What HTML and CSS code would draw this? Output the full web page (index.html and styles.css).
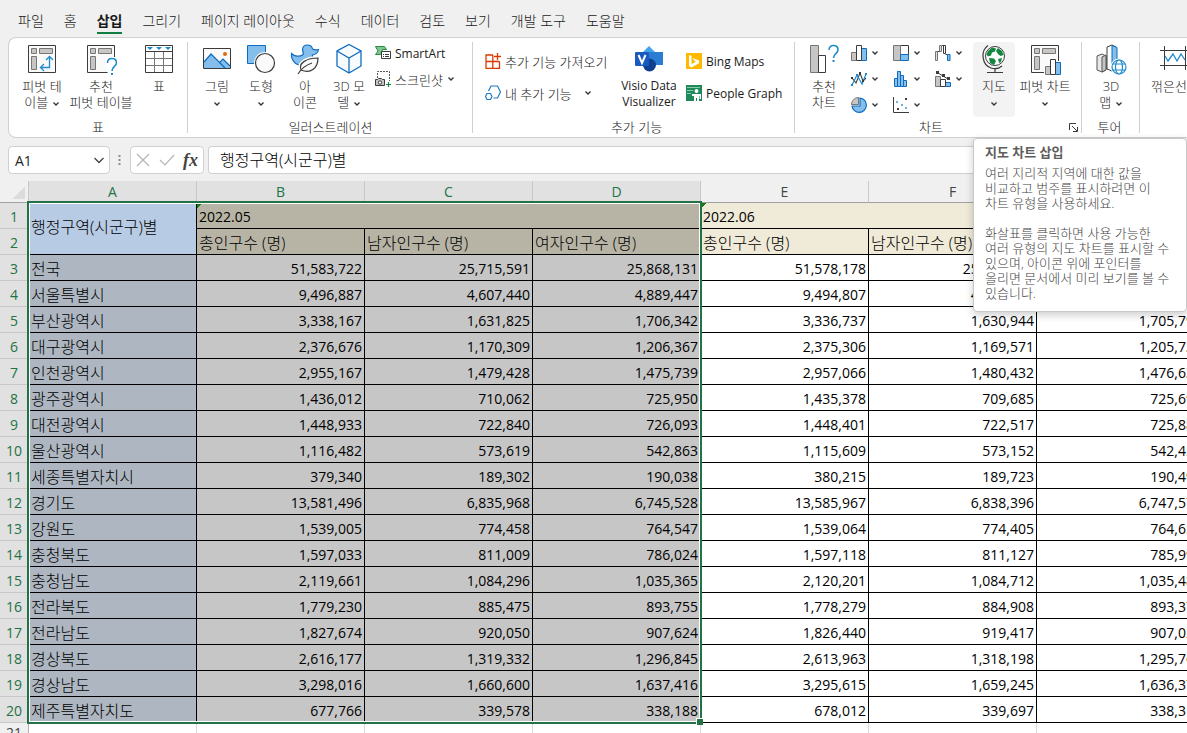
FILE: index.html
```html
<!DOCTYPE html>
<html lang="ko">
<head>
  <meta charset="UTF-8">
  <meta name="viewport" content="width=device-width, initial-scale=1.0">
  <title>행정구역별 인구</title>
  <link rel="stylesheet" href="styles.css">
</head>
<body>

  <svg class="defs" aria-hidden="true">
    <symbol id="chev" viewBox="0 0 8 6"><path d="M1.500 1.500 4 4l2.500-2.500" fill="none" stroke="#333" stroke-width="1.300"/></symbol>
  </svg>

  <!-- Tabs -->
  <nav class="tabs">
    <a href="#">파일</a>
    <a href="#">홈</a>
    <a href="#" class="active">삽입</a>
    <a href="#">그리기</a>
    <a href="#">페이지 레이아웃</a>
    <a href="#">수식</a>
    <a href="#">데이터</a>
    <a href="#">검토</a>
    <a href="#">보기</a>
    <a href="#">개발 도구</a>
    <a href="#">도움말</a>
  </nav>

  <!-- Ribbon -->
  <div class="ribbon">
    <section class="group tables">
      <div class="tools">
        <button class="big w54">
          <svg class="icon" viewBox="0 0 32 32" fill="none"><path d="M2.500 2.500h27v27h-27z" fill="#fafafa" stroke="#3b3b3b"/><path d="M5.500 5.500h5v5h-5zM13.500 5.500h13v5h-13zM5.500 13.500h5v13h-5z" fill="#c8c6c4" stroke="#797774"/><path d="M15 24.500h8.500V14M20 17l3.500-3.500L27 17M18 21l-3.500 3.500L18 28" stroke="#1e8bcd" stroke-width="1.300"/></svg>
          <span>피벗 테<br>이블 <svg class="chev"><use href="#chev"/></svg></span>
        </button>
        <button class="big w64">
          <svg class="icon" viewBox="0 0 32 32" fill="none"><path d="M2.500 2.500h27v27h-27z" fill="#fafafa" stroke="#3b3b3b"/><path d="M5.500 5.500h5v5h-5zM13.500 5.500h13v5h-13zM5.500 13.500h5v13h-5z" fill="#c8c6c4" stroke="#797774"/><path d="M20 14h12v18H23z" fill="#fff"/><path d="M22.500 20c0-3 2-4.500 4.500-4.500s4.500 1.600 4.500 4.300c0 3.700-4.500 3.700-4.500 8.200" stroke="#1e8bcd" stroke-width="1.600"/><path d="M26 30h2v2h-2z" fill="#1e8bcd"/></svg>
          <span>추천<br>피벗 테이블</span>
        </button>
        <button class="big w52">
          <svg class="icon" viewBox="0 0 32 32" fill="none"><path d="M2.500 2.500h27v27h-27z" fill="#fff" stroke="#3b3b3b"/><path d="M3 15.500h26M3 22.500h26M11.500 9v20M20.500 9v20" stroke="#797774"/><path d="M2 8.500h28" stroke="#3b3b3b"/><path d="M4 4h6L7 7zM13 4h6l-3 3zM22 4h6l-3 3z" fill="#1e8bcd"/></svg>
          <span>표</span>
        </button>
      </div>
      <div class="caption">표</div>
    </section>

    <section class="group illust">
      <div class="tools">
        <button class="big w44">
          <svg class="icon" viewBox="0 0 32 32"><path d="M2.500 5.500h27v20h-27z" fill="#fafafa"/><path d="M3 19l7-8 8 9 4-4 7 7v2H3z" fill="#83beec"/><path d="M3 19l7-8 14 14M18 20l4-4 7 7" fill="none" stroke="#0f6cbd" stroke-width="1.200"/><path d="M2.500 5.500h27v20h-27z" fill="none" stroke="#3b3b3b"/><circle cx="24" cy="11" r="2" fill="#d86b0b"/></svg>
          <span>그림<br><svg class="chev"><use href="#chev"/></svg></span>
        </button>
        <button class="big w44">
          <svg class="icon" viewBox="0 0 32 32"><path d="M2.500 2.500h18v18h-18z" fill="#83beec" stroke="#0f6cbd"/><circle cx="20" cy="20" r="11" fill="#fff"/><circle cx="20" cy="20" r="9.500" fill="#fafafa" stroke="#3b3b3b" stroke-width="1.200"/></svg>
          <span>도형<br><svg class="chev"><use href="#chev"/></svg></span>
        </button>
        <button class="big w44">
          <svg class="icon" viewBox="0 0 32 32"><path d="M2.500 10.500c3 3 8 3.500 11 1.500 2-1.500 0-4 0-5 0-3 2-5 5-5 2.500 0 4.500 1.500 5 4 2 1 4 1 6 .5-.5 3-3 5-6 5.500 1 5-3 10.500-10 10.500C6 22.500 2 17 2.500 10.500z" fill="#83beec" stroke="#0f6cbd" stroke-width="1.200"/><path d="M12 27c-3-7 6-12 17-12 0 10-7 16-17 12z" fill="#fff" stroke="#fff" stroke-width="4"/><path d="M12 27c-3-7 6-12 17-12 0 10-7 16-17 12zM9 31c3-5 8-9 14-11" fill="#fafafa" stroke="#3b3b3b" stroke-width="1.200"/></svg>
          <span>아<br>이콘</span>
        </button>
        <button class="big w44">
          <svg class="icon" viewBox="0 0 32 32"><path d="M16 1.500 28 8v15l-12 7-12-7V8z" fill="#f8fbfe" stroke="#0f6cbd" stroke-width="1.300"/><path d="M4 8l12 7 12-7M16 15v15" fill="none" stroke="#0f6cbd" stroke-width="1.300"/></svg>
          <span>3D 모<br>델 <svg class="chev"><use href="#chev"/></svg></span>
        </button>
        <div class="stack">
          <button class="small latin">
            <svg class="mini" viewBox="0 0 16 16"><path d="M.500 1.500h9l2 3h-4l-2 5h-5L3 6z" fill="#7fc692" stroke="#2b8a3e"/><path d="M6.500 6.500h9v7h-9z" fill="#fff" stroke="#3b3b3b"/><path d="M8 9.500h1m1 0h4M8 11.500h1m1 0h4" stroke="#3b3b3b"/></svg>
            <span>SmartArt</span>
          </button>
          <button class="small">
            <svg class="mini" viewBox="0 0 16 16" fill="none"><path d="M2.500 7V.500h12V10" stroke="#555" stroke-dasharray="2 1"/><path d="M.500 8.500h2l1-1h3l1 1h2v6h-9z" fill="#c8c6c4" stroke="#3b3b3b"/><circle cx="5" cy="11.500" r="1.700" fill="#fff" stroke="#3b3b3b"/><path d="M13.500 11v5M11 13.500h5" stroke="#13873d" stroke-width="1.200"/></svg>
            <span>스크린샷</span><svg class="chev"><use href="#chev"/></svg>
          </button>
        </div>
      </div>
      <div class="caption">일러스트레이션</div>
    </section>

    <section class="group addins">
      <div class="tools">
        <div class="stack wide first">
          <button class="small">
            <svg class="mini" viewBox="0 0 16 16" fill="none"><path d="M8 2H1v13.300h13.500V8.500M1 8.500h13.500M7.800 2v13" stroke="#d83b01" stroke-width="1.300"/><path d="M12.500 0v7M9 3.500h7" stroke="#d83b01" stroke-width="1.300"/></svg>
            <span>추가 기능 가져오기</span>
          </button>
          <button class="small">
            <svg class="mini" viewBox="0 0 16 16" fill="none" stroke="#1e78c8" stroke-width="1.200"><path d="M3.500 6 6 1h6.500L15.500 7l-3 6H8.500"/><path d="M2 8.500h3.500l1.500 3-1.500 3H2l-1.500-3z"/></svg>
            <span>내 추가 기능</span><svg class="chev far"><use href="#chev"/></svg>
          </button>
        </div>
        <button class="big latin w66">
          <svg class="icon" viewBox="0 0 32 32"><path d="M16 3 26 13 16 23 6 13z" fill="#41a5ee"/><path d="M16 9h14v13H16z" fill="#2b7cd3"/><circle cx="16.500" cy="22" r="6.500" fill="#103f91"/><rect x="2" y="9" width="14" height="14" rx="1" fill="#185abd"/><path d="M5.500 12 9 20l3.500-8" fill="none" stroke="#fff" stroke-width="2"/></svg>
          <span>Visio Data<br>Visualizer</span>
        </button>
        <div class="stack wide">
          <button class="small latin">
            <svg class="mini" viewBox="0 0 16 16"><path d="M0 0h16v16H0z" fill="#ffb900"/><path d="M3 2l2.500 1v8L13 7.500v2.700L5.500 14.500 3 13z" fill="#fff"/><path d="M6.500 5 13 7.500v2.500L9 8.500z" fill="#fff"/></svg>
            <span>Bing Maps</span>
          </button>
          <button class="small latin">
            <svg class="mini" viewBox="0 0 16 16"><path d="M0 0h16v16H0z" fill="#1e8a5b"/><path d="M1 2.500h13M1 5.500h6M1 8.500h4" stroke="#8ccbae"/><circle cx="10.500" cy="6" r="2" fill="#fff"/><path d="M6 9h9v5h-1.500v-3H13v5h-2v-3h-1v3H8v-5H6z" fill="#fff"/></svg>
            <span>People Graph</span>
          </button>
        </div>
      </div>
      <div class="caption">추가 기능</div>
    </section>

    <section class="group charts">
      <div class="tools">
        <button class="big w50">
          <svg class="icon" viewBox="0 0 32 32" fill="none"><path d="M2.500 2.500h8v27h-8z" fill="#c8c6c4" stroke="#797774"/><path d="M10.500 12.500h7v17h-7z" fill="#fff" stroke="#3b3b3b"/><path d="M21 7c0-3 2-4.500 4.500-4.500S30 4 30 6.800c0 4-4.500 3.700-4.500 8.200" stroke="#1e8bcd" stroke-width="1.600"/><path d="M24.500 17h2v2h-2z" fill="#1e8bcd"/></svg>
          <span>추천<br>차트</span>
        </button>
        <div class="chart-grid">
          <button class="small" aria-label="세로 막대형"><svg class="mini" viewBox="0 0 16 16"><path d="M.500 7.500h5v8h-5z" fill="#c8c6c4" stroke="#797774"/><path d="M10.500 3.500h5v12h-5z" fill="#83beec" stroke="#0f6cbd"/><path d="M5.500.500h5v15h-5z" fill="#fff" stroke="#3b3b3b"/></svg><svg class="chev"><use href="#chev"/></svg></button>
          <button class="small" aria-label="계층 구조"><svg class="mini" viewBox="0 0 16 16"><path d="M7.500.500h8v9h-8z" fill="#fff" stroke="#3b3b3b"/><path d="M.500.500h7v15h-7z" fill="#c8c6c4" stroke="#797774"/><path d="M7.500 9.500h8v6h-8z" fill="#83beec" stroke="#0f6cbd"/></svg><svg class="chev"><use href="#chev"/></svg></button>
          <button class="small" aria-label="폭포"><svg class="mini" viewBox="0 0 16 16" fill="#fff"><path d="M.500 6.500h2v9h-2zM4.500.500h2v6h-2z" fill="#ddd" stroke="#797774"/><path d="M2.500 6.500h2M7 .500h3.500v8h-2v-8M10.500 9.500h2" stroke="#3b3b3b"/><path d="M12.500 9.500h2.500v6h-2.500z" fill="#83beec" stroke="#0f6cbd"/></svg><svg class="chev"><use href="#chev"/></svg></button>
          <button class="small" aria-label="꺾은선형"><svg class="mini" viewBox="0 0 16 16" fill="none"><path d="M1 7l4 5 4-10 3 8 3-3" stroke="#3b3b3b" stroke-width="1.100"/><path d="M1 14 6 4l5 9 4-10" stroke="#1e8bcd" stroke-width="1.200"/><path d="M0 6h2v2H0zM8 1h2v2H8zM11 9h2v2h-2z" fill="#3b3b3b"/><path d="M0 13h2v2H0zM5 3h2v2H5zM14 2h2v2h-2z" fill="#1e8bcd"/></svg><svg class="chev"><use href="#chev"/></svg></button>
          <button class="small" aria-label="히스토그램"><svg class="mini" viewBox="0 0 16 16"><path d="M1.500 7.500h3v8h-3zM4.500.500h3v15h-3zM7.500 4.500h3v11h-3zM10.500 9.500h3v6h-3z" fill="#83beec" stroke="#0f6cbd"/></svg><svg class="chev"><use href="#chev"/></svg></button>
          <button class="small" aria-label="혼합"><svg class="mini" viewBox="0 0 16 16"><path d="M.500 5.500h5v10h-5z" fill="#c8c6c4" stroke="#797774"/><path d="M10.500 11.500h5v4h-5z" fill="#83beec" stroke="#0f6cbd"/><path d="M5.500 8.500h5v7h-5z" fill="#fff" stroke="#3b3b3b"/><path d="M3 2l5 3 5 3" fill="none" stroke="#3b3b3b"/><path d="M1 0h3v3H1zM7 3h3v3H7zM12 6h3v3h-3z" fill="#3b3b3b"/></svg><svg class="chev"><use href="#chev"/></svg></button>
          <button class="small" aria-label="원형"><svg class="mini" viewBox="0 0 16 16"><path d="M9 1a7.200 7.200 0 1 1-8 8h8z" fill="#83beec" stroke="#0f6cbd" stroke-width="1.200"/><path d="M7.500.500v7h-7a7 7 0 0 1 7-7z" fill="#c8c6c4" stroke="#797774"/></svg><svg class="chev"><use href="#chev"/></svg></button>
          <button class="small" aria-label="분산형"><svg class="mini" viewBox="0 0 16 16"><path d="M.500 0v15.500H16" fill="none" stroke="#3b3b3b"/><path d="M12 1h2v2h-2zM4 11h2v2H4z" fill="#3b3b3b"/><path d="M3 4h2v2H3zM8 7h2v2H8zM12 10h2v2h-2z" fill="#6bb0e4"/></svg><svg class="chev"><use href="#chev"/></svg></button>
        </div>
        <button class="big w42 hovered">
          <svg class="icon" viewBox="0 0 32 32"><circle cx="17" cy="13" r="9.500" fill="#fff" stroke="#3b3b3b"/><path d="M10 8l4-3.500 4 1-1 3-3 1-1 3-3 1-1.500-2zM20 5l4 3 1.500 4-3 1-2.500-2-2-3zM11 15l5 .5 2 2.500-2 4-4-2zM20 16l4-1-1 4-2 1z" fill="#13873d"/><path d="M10 2.500C2 8 4 22 13 25c4 1.300 8 .5 11-2M17 26v3M9 29.500h16" fill="none" stroke="#3b3b3b" stroke-width="1.200"/></svg>
          <span>지도<br><svg class="chev"><use href="#chev"/></svg></span>
        </button>
        <button class="big w60">
          <svg class="icon" viewBox="0 0 32 32"><path d="M2.500 2.500h27v27h-27z" fill="#fafafa" stroke="#3b3b3b"/><path d="M5.500 5.500h5v5h-5zM13.500 5.500h13v5h-13zM5.500 13.500h5v13h-5z" fill="#c8c6c4" stroke="#797774"/><path d="M15 22h5v-7h7v3h6v14H15z" fill="#fff"/><path d="M16.500 23.500h5v8h-5z" fill="#c8c6c4" stroke="#797774"/><path d="M26.500 19.500h5v12h-5z" fill="#83beec" stroke="#0f6cbd"/><path d="M21.500 16.500h5v15h-5z" fill="#fff" stroke="#3b3b3b"/></svg>
          <span>피벗 차트<br><svg class="chev"><use href="#chev"/></svg></span>
        </button>
      </div>
      <div class="caption with-launcher">
        <span>차트</span>
        <button class="launcher" aria-label="차트 옵션"><svg viewBox="0 0 9 9" fill="none" stroke="#3b3b3b"><path d="M.500 7V.500H7M3 3l5 5M8.500 4v4.500H4"/></svg></button>
      </div>
    </section>

    <section class="group tour">
      <div class="tools">
        <button class="big w50">
          <svg class="icon" viewBox="0 0 32 32"><path d="M2 13l5-2 4 2v14l-4 2-5-2z" fill="#e8e8e8" stroke="#555"/><path d="M7 14l4-2v15l-4 2z" fill="#c8c6c4" stroke="#555"/><path d="M12 4l5-2 4 2v23l-4 1-5-2z" fill="#fff" stroke="#3b3b3b"/><path d="M17 2.500l5 2V27h-5z" fill="#83beec" stroke="#0f6cbd"/><circle cx="24" cy="24" r="8.500" fill="#fff"/><g fill="#fff" stroke="#1e8bcd" stroke-width="1.200"><circle cx="24" cy="24" r="7"/><ellipse cx="24" cy="24" rx="3.500" ry="7"/><path d="M18 21h12M18 27h12"/></g></svg>
          <span>3D<br>맵 <svg class="chev"><use href="#chev"/></svg></span>
        </button>
      </div>
      <div class="caption">투어</div>
    </section>

    <section class="group spark">
      <div class="tools">
        <button class="big w60">
          <svg class="icon" viewBox="0 0 32 32" fill="none"><path d="M1 7.500h30M1 22.500h30M5.500 3v24M26.500 3v24" stroke="#3b3b3b"/><path d="M6 13l3 5 5-7 4 7 4-7 4 6" stroke="#1e8bcd" stroke-width="1.300"/></svg>
          <span>꺾은선형</span>
        </button>
      </div>
      <div class="caption"></div>
    </section>
  </div>

  <!-- Formula bar -->
  <div class="formula-bar">
    <div class="box name-box">
      <input type="text" value="A1" aria-label="이름 상자">
      <button aria-label="이름 목록"><svg width="10" height="7" viewBox="0 0 10 7"><path d="M.500 1 5 5.500 9.500 1" fill="none" stroke="#444" stroke-width="1.300"/></svg></button>
    </div>
    <svg class="grip" width="3" height="12" viewBox="0 0 3 12"><path d="M.500 1h2v2h-2zM.500 5h2v2h-2zM.500 9h2v2h-2z" fill="#8a8a8a"/></svg>
    <div class="box fx-box">
      <button aria-label="취소"><svg width="14" height="14" viewBox="0 0 14 14"><path d="M1 1l12 12M13 1 1 13" stroke="#b5b5b5" stroke-width="1.200"/></svg></button>
      <button aria-label="입력"><svg width="16" height="14" viewBox="0 0 16 14"><path d="M1 7l5 5L15 2" fill="none" stroke="#b5b5b5" stroke-width="1.200"/></svg></button>
      <button class="fx">fx</button>
    </div>
    <input class="box formula" type="text" value="행정구역(시군구)별" aria-label="수식 입력줄">
  </div>

  <!-- Sheet -->
  <main class="sheet">
    <table>
      <colgroup>
        <col class="col-num">
        <col class="col"><col class="col"><col class="col"><col class="col"><col class="col"><col class="col"><col class="col">
      </colgroup>
      <thead>
        <tr>
          <th class="corner"></th>
          <th class="on">A</th><th class="on">B</th><th class="on">C</th><th class="on">D</th>
          <th>E</th><th>F</th><th>G</th>
        </tr>
      </thead>
      <tbody id="rows">
        <tr>
          <th class="on">1</th>
          <td class="title sel" rowspan="2">행정구역(시군구)별</td>
          <td class="period sel flag" colspan="3">2022.05</td>
          <td class="period flag" colspan="3">2022.06</td>
        </tr>
        <tr>
          <th class="on">2</th>
          <td class="head sel">총인구수 (명)</td><td class="head sel">남자인구수 (명)</td><td class="head sel">여자인구수 (명)</td>
          <td class="head">총인구수 (명)</td><td class="head">남자인구수 (명)</td><td class="head">여자인구수 (명)</td>
        </tr>
      </tbody>
    </table>
    <div class="selection"></div>
  </main>

  <!-- Tooltip -->
  <div class="tooltip" role="tooltip">
    <h2>지도 차트 삽입</h2>
    <p>여러 지리적 지역에 대한 값을<br>비교하고 범주를 표시하려면 이<br>차트 유형을 사용하세요.</p>
    <p>화살표를 클릭하면 사용 가능한<br>여러 유형의 지도 차트를 표시할 수<br>있으며, 아이콘 위에 포인터를<br>올리면 문서에서 미리 보기를 볼 수<br>있습니다.</p>
  </div>

  <script>
    // region, then total / male for May and for June
    const data = [
      ["전국", 51583722, 25715591, 51578178, 25711866],
      ["서울특별시", 9496887, 4607440, 9494807, 4605632],
      ["부산광역시", 3338167, 1631825, 3336737, 1630944],
      ["대구광역시", 2376676, 1170309, 2375306, 1169571],
      ["인천광역시", 2955167, 1479428, 2957066, 1480432],
      ["광주광역시", 1436012, 710062, 1435378, 709685],
      ["대전광역시", 1448933, 722840, 1448401, 722517],
      ["울산광역시", 1116482, 573619, 1115609, 573152],
      ["세종특별자치시", 379340, 189302, 380215, 189723],
      ["경기도", 13581496, 6835968, 13585967, 6838396],
      ["강원도", 1539005, 774458, 1539064, 774405],
      ["충청북도", 1597033, 811009, 1597118, 811127],
      ["충청남도", 2119661, 1084296, 2120201, 1084712],
      ["전라북도", 1779230, 885475, 1778279, 884908],
      ["전라남도", 1827674, 920050, 1826440, 919417],
      ["경상북도", 2616177, 1319332, 2613963, 1318198],
      ["경상남도", 3298016, 1660600, 3295615, 1659245],
      ["제주특별자치도", 677766, 339578, 678012, 339697]
    ];

    const rows = document.getElementById("rows");

    data.forEach((d, i) => {
      const cells = [d[1], d[2], d[1] - d[2], d[3], d[4], d[3] - d[4]];
      const tr = document.createElement("tr");
      tr.innerHTML = `<th class="on">${i + 3}</th><td class="region sel">${d[0]}</td>` +
        cells.map((n, c) => `<td class="num${c < 3 ? " sel" : ""}">${n.toLocaleString("en-US")}</td>`).join("");
      rows.appendChild(tr);
    });

    // empty row under the data
    const last = document.createElement("tr");
    last.className = "empty";
    last.innerHTML = "<th>21</th>" + "<td></td>".repeat(7);
    rows.appendChild(last);
  </script>
</body>
</html>
```
FILE: styles.css
```css
* {
  box-sizing: border-box;
}

body {
  margin: 0;
  height: 100vh;
  display: flex;
  flex-direction: column;
  position: relative;
  overflow: hidden;
  background-color: #f0f0f0;
  color: #1a1a1a;
  font-family: "Open Sans", "Noto Sans CJK KR", sans-serif;
  font-size: 13px;
  font-weight: 300;
}

button {
  font: inherit;
  color: inherit;
  background: none;
  border: none;
  padding: 0;
  cursor: pointer;
}

svg {
  flex: none;
}

.defs {
  position: absolute;
  width: 0;
  height: 0;
}

/* tabs */
.tabs {
  display: flex;
  flex: none;
  gap: 20px;
  height: 37px;
  padding: 10px 18px 0;
  font-size: 14px;
  line-height: 22px;
  white-space: nowrap;
}

.tabs a {
  height: 24px;
  color: #1a1a1a;
  text-decoration: none;
}

.tabs .active {
  font-weight: bold;
  border-bottom: 2px solid #107c41;
}

/* ribbon */
.ribbon {
  display: flex;
  flex: none;
  height: 101px;
  margin-left: 8px;
  padding: 4px 0;
  overflow: hidden;
  background-color: #fff;
  border: 1px solid #d0d0d0;
  border-right: none;
  border-radius: 8px 0 0 8px;
}

.group {
  display: flex;
  flex: none;
  flex-direction: column;
  border-right: 1px solid #d0d0d0;
}

.tables { width: 179px; padding-left: 6px; }
.illust { width: 285px; padding-left: 7px; }
.addins { width: 322px; padding-left: 12px; }
.charts { width: 287px; padding-left: 4px; }
.tour { width: 58px; padding-left: 4px; }
.spark { padding-left: 5px; }

.tools {
  display: flex;
  flex: none;
  align-items: flex-start;
  height: 75px;
}

.big {
  display: flex;
  flex: none;
  flex-direction: column;
  align-items: center;
  gap: 3px;
  height: 75px;
  line-height: 16px;
  text-align: center;
  white-space: nowrap;
  border-radius: 4px;
}

.w42 { width: 42px; }
.w44 { width: 44px; }
.w50 { width: 50px; }
.w52 { width: 52px; }
.w54 { width: 54px; }
.w60 { width: 60px; }
.w64 { width: 64px; }
.w66 { width: 66px; }

.latin {
  font-size: 12px;
  font-weight: normal;
}

.hovered {
  background-color: #f3f3f3;
}

.icon {
  width: 32px;
  height: 32px;
  margin-top: 1px;
}

.mini {
  width: 16px;
  height: 16px;
}

.chev {
  width: 8px;
  height: 6px;
}

.chev.far {
  margin-left: 8px;
}

.stack {
  display: flex;
  flex-direction: column;
  margin-top: -2px;
  padding-left: 4px;
}

.stack .small {
  height: 26px;
}

.wide {
  padding-top: 5px;
}

.wide .small {
  height: 32px;
}

.first {
  width: 131px;
  padding-left: 0;
}

.small {
  display: flex;
  align-items: center;
  gap: 4px;
  white-space: nowrap;
}

.chart-grid {
  display: grid;
  grid-template-columns: repeat(3, 42px);
  grid-auto-rows: 26px;
  margin: -2px -4px 0 0;
  padding-left: 2px;
}

.caption {
  margin-left: -6px;
  height: 20px;
  line-height: 20px;
  text-align: center;
}

.with-launcher {
  display: flex;
  align-items: center;
}

.with-launcher span {
  flex: 1;
}

.launcher {
  width: 12px;
  height: 10px;
}

.launcher svg {
  display: block;
  width: 9px;
  height: 9px;
}

/* formula bar */
.formula-bar {
  display: flex;
  flex: none;
  align-items: center;
  gap: 4px;
  padding: 8px 0 7px 8px;
}

.box {
  display: flex;
  align-items: center;
  height: 28px;
  background-color: #fff;
  border: 1px solid #d0d0d0;
  border-radius: 4px;
}

.box button svg {
  display: block;
}

.name-box {
  width: 102px;
  padding: 0 5px 0 6px;
}

.name-box input {
  width: 100%;
  min-width: 0;
  padding: 0;
  border: none;
  outline: none;
  font-family: inherit;
  font-size: 14px;
  color: #262626;
}

.grip {
  margin: 0 5px 0 4px;
}

.fx-box {
  width: 74px;
  justify-content: space-between;
  padding: 0 5px;
}

.fx {
  font-family: "Liberation Serif", serif;
  font-size: 18px;
  font-style: italic;
  font-weight: bold;
  color: #444;
}

.formula {
  flex: 1;
  min-width: 0;
  padding: 0 11px 2px;
  border-right: none;
  border-radius: 4px 0 0 4px;
  font-family: inherit;
  font-size: 16px;
  font-weight: inherit;
  color: #000;
}

/* sheet */
.sheet {
  flex: 1;
  position: relative;
  overflow: hidden;
}

table {
  width: 1205px;
  table-layout: fixed;
  border-collapse: separate;
  border-spacing: 0;
  background-color: #fff;
}

.col-num { width: 29px; }
.col { width: 168px; }

th {
  height: 26px;
  padding: 3px 0 0;
  font-size: 14px;
  font-weight: normal;
  line-height: 20px;
  color: #444;
  background-color: #f0f0f0;
  border-right: 1px solid #b0b0b0;
  border-bottom: 1px solid #c8c8c8;
}

thead th {
  height: 22px;
  padding: 0;
  border-right-color: #c8c8c8;
  border-bottom-color: #a0a0a0;
}

th.on {
  color: #217346;
  background-color: #e1e1e1;
}

.corner {
  background: linear-gradient(135deg, #f0f0f0 0 50%, #dcdcdc 50%) 12px 5px / 13px 13px no-repeat #f0f0f0;
}

td {
  height: 26px;
  padding: 2px 2px 0;
  overflow: hidden;
  font-size: 16px;
  line-height: 22px;
  color: #000;
  white-space: nowrap;
  border-right: 1px solid #000;
  border-bottom: 1px solid #000;
}

.title {
  padding-bottom: 6px;
  background-color: #b8cbe4;
}

.period,
.head {
  background-color: #f0ead8;
}

.period.sel,
.head.sel {
  background-color: #b8b4a5;
}

.period,
.num {
  font-size: 14px;
  font-weight: normal;
}

.flag {
  background-image: linear-gradient(135deg, #107c10 4px, transparent 4px);
}

.num {
  text-align: right;
}

.num.sel {
  background-color: #c6c6c6;
}

.region {
  background-color: #aeb7c1;
}

.empty th {
  padding-top: 0;
  vertical-align: top;
}

.empty td {
  border-color: #d8d8d8;
}

.selection {
  position: absolute;
  top: 20px;
  left: 27px;
  width: 675px;
  height: 523px;
  border: 2px solid #217346;
  box-shadow: inset 0 0 0 1px #fff;
}

.selection::after {
  content: "";
  position: absolute;
  right: -3px;
  bottom: -3px;
  width: 6px;
  height: 6px;
  background-color: #217346;
  border-top: 1px solid #fff;
  border-left: 1px solid #fff;
}

/* tooltip */
.tooltip {
  position: absolute;
  top: 138px;
  left: 973px;
  width: 214px;
  padding: 6px 11px 10px;
  color: #444;
  line-height: 15px;
  white-space: nowrap;
  background-color: #fff;
  border: 1px solid #c8c8c8;
  border-radius: 4px;
  box-shadow: 0 3px 8px rgba(0, 0, 0, 0.2);
}

.tooltip h2 {
  margin: 0 0 6px;
  font-size: 13px;
  font-weight: bold;
  color: #605e5c;
}

.tooltip p {
  margin: 0 0 15px;
}

.tooltip p:last-child {
  margin: 0;
}
```
